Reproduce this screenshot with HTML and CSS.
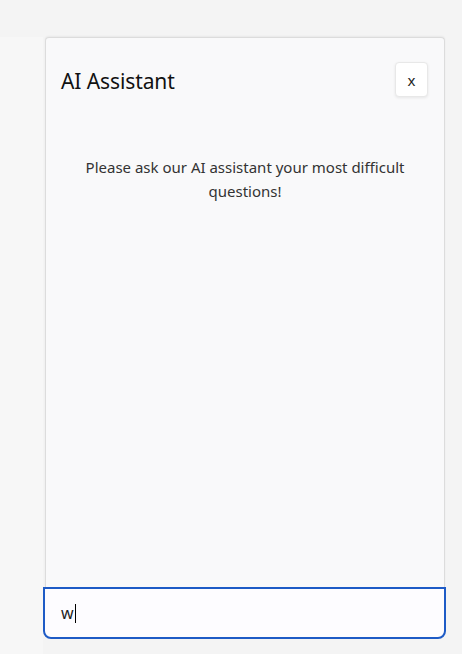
FILE: index.html
```html
<!DOCTYPE html>
<html lang="en">
<head>
<meta charset="utf-8">
<title>AI Assistant</title>
<link rel="stylesheet" href="styles.css">
</head>
<body>
<div class="page">
  <aside class="strip"></aside>
  <div class="chat">
    <section class="panel">
      <header class="panel-header">
        <h1 class="panel-title">AI Assistant</h1>
        <button class="close-btn" type="button">x</button>
      </header>
      <p class="intro">Please ask our AI assistant your most difficult questions!</p>
    </section>
    <div class="composer" role="textbox" aria-label="Message">
      <span class="composer-text">w</span><span class="caret"></span>
    </div>
  </div>
</div>
</body>
</html>
```
FILE: styles.css
```css
* { box-sizing: border-box; }
html, body {
  margin: 0;
  height: 100%;
  background: #f4f4f4;
  font-family: "Noto Sans", "Open Sans", sans-serif;
  color: #1b1b1b;
}
.page {
  display: flex;
  height: 100%;
  padding-top: 37px;
}
.strip {
  width: 43px;
  background: #f7f7f7;
}
.chat {
  width: 403px;
  display: flex;
  flex-direction: column;
}
.panel {
  margin: 0 1px 0 2px;
  height: 550px;
  background: #f9f9fa;
  border: 1px solid #dcdcdc;
  border-bottom: none;
  border-radius: 4px 4px 0 0;
  box-shadow: 0 -1px 2px rgba(0,0,0,0.05);
  display: flex;
  flex-direction: column;
}
.panel-header {
  display: flex;
  align-items: center;
  justify-content: space-between;
  padding: 24px 16px 0 15px;
}
.panel-title {
  margin: 0;
  font-size: 21px;
  font-weight: 400;
  color: #111;
  letter-spacing: -0.1px;
  position: relative;
  top: 1px;
}
.close-btn {
  width: 33px;
  height: 35px;
  padding: 0;
  background: #fff;
  border: 1px solid #e8e8e8;
  border-radius: 4px;
  box-shadow: 0 1px 3px rgba(0,0,0,0.08);
  font-family: inherit;
  font-size: 15px;
  color: #222;
}
.intro {
  margin: 58px 0 0;
  padding: 0 30px;
  text-align: center;
  font-size: 15px;
  line-height: 24px;
  color: #333;
}
.composer {
  height: 52px;
  display: flex;
  align-items: center;
  border: 2px solid #1e5bc6;
  border-radius: 0 0 8px 8px;
  background: #fdfcff;
  padding: 0 0 0 16px;
  font-size: 16px;
  color: #222;
}
.composer-text {
  line-height: 20px;
}
.caret {
  width: 1px;
  height: 19px;
  margin-left: 1px;
  background: #000;
}
```
